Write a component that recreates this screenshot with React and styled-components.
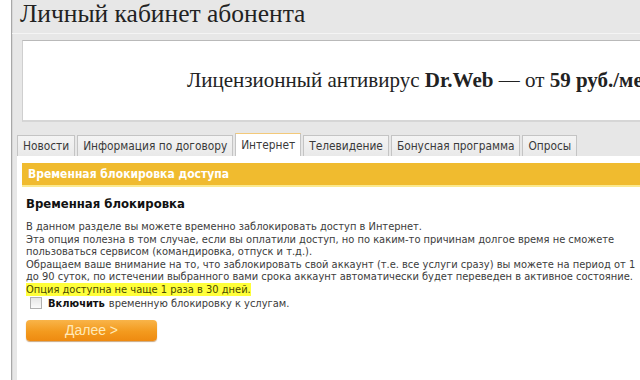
import React from "react";
import styled, { createGlobalStyle } from "styled-components";

const GlobalStyle = createGlobalStyle`
  html, body {
    margin: 0;
    padding: 0;
    background: #ffffff;
    overflow: hidden;
  }
`;

const sans = `"DejaVu Sans Condensed", "DejaVu Sans", Verdana, sans-serif`;

const Page = styled.div`
  width: 640px;
  height: 380px;
  overflow: hidden;
  background: #fff;
  padding-left: 11px;
  box-sizing: border-box;
`;

const Frame = styled.div`
  height: 100%;
  border-left: 1px solid #a8a8a8;
  box-shadow: inset 1px 0 0 #d8d8d8;
  background: #e7e7e7;
  display: flex;
  flex-direction: column;
`;

const Title = styled.h1`
  margin: 0;
  padding: 0 0 0 8px;
  height: 33px;
  font-family: "Liberation Serif", "DejaVu Serif", serif;
  font-weight: normal;
  font-size: 25.5px;
  line-height: 28px;
  color: #222;
  border-bottom: 1px solid #f4f4f4;
  white-space: nowrap;
  overflow: hidden;
`;

const Banner = styled.div`
  margin: 6px 0 0 10px;
  height: 79px;
  background: #fff;
  border-top: 1px solid #b9b9b9;
  border-left: 1px solid #cfcfcf;
  border-bottom: 2px solid #d6d6d6;
  display: flex;
  align-items: center;
  padding-left: 164px;
  white-space: nowrap;
  overflow: hidden;
  font-family: "Liberation Serif", "DejaVu Serif", serif;
  font-size: 21px;
  color: #222;

  b {
    font-weight: bold;
  }
`;

const Tabs = styled.div`
  display: flex;
  align-items: flex-end;
  margin: 11px 0 0 5px;
  height: 23px;
`;

const Tab = styled.div`
  height: ${({ $active }) => ($active ? "23px" : "21px")};
  box-sizing: border-box;
  padding: 0 5px;
  margin-right: 2px;
  display: flex;
  align-items: center;
  font-family: ${sans};
  font-stretch: condensed;
  font-size: 11.8px;
  color: #3a3a3a;
  white-space: nowrap;
  background: ${({ $active }) =>
    $active ? "#fff" : "linear-gradient(#f4f4f4, #e9e9e9)"};
  border: 1px solid #c4c4c4;
  border-top: 1px solid ${({ $active }) => ($active ? "#f3c97a" : "#c4c4c4")};
  border-bottom: none;
`;

const Content = styled.div`
  flex: 1;
  margin-left: 5px;
  background: #fff;
  padding: 7px 0 0 5px;
  font-family: ${sans};
  font-stretch: condensed;
  color: #333;
`;

const Bar = styled.div`
  height: 22px;
  background: #f0bb2f;
  border-bottom: 2px solid #fbe98e;
  color: #fff;
  font-weight: bold;
  font-size: 12px;
  padding-left: 6px;
  display: flex;
  align-items: center;
  white-space: nowrap;
`;

const Body = styled.div`
  padding: 9px 0 0 4px;
`;

const Heading = styled.h2`
  margin: 0 0 10px;
  font-size: 13px;
  font-weight: bold;
  color: #111;
`;

const Text = styled.p`
  margin: 0;
  font-size: 11px;
  line-height: 12.6px;
  color: #3c3c3c;
  white-space: nowrap;
`;

const Mark = styled.span`
  background: #ffff3a;
  color: #4a4a00;
`;

const Check = styled.label`
  display: flex;
  align-items: center;
  margin: 0 0 0 4px;
  font-size: 11px;
  color: #3c3c3c;

  b {
    color: #111;
    margin-right: 4px;
  }
`;

const Box = styled.span`
  width: 10px;
  height: 10px;
  border: 1px solid #b0b0b0;
  background: linear-gradient(#e6e6e6, #fafafa);
  margin-right: 6px;
`;

const Button = styled.button`
  margin-top: 10px;
  width: 131px;
  height: 21px;
  border: none;
  border-radius: 4px;
  background: linear-gradient(#f9b449, #f39a1e 55%, #ee8a10);
  box-shadow: 0 1px 1px rgba(150, 80, 0, 0.5);
  color: #ffe9b8;
  font-family: "Liberation Sans", Arial, sans-serif;
  font-size: 14px;
  padding: 0;
`;

export default function App() {
  return (
    <>
      <GlobalStyle />
      <Page>
        <Frame>
          <Title>Личный кабинет абонента</Title>
          <Banner>
            Лицензионный антивирус&nbsp;<b>Dr.Web</b>&nbsp;— от&nbsp;<b>59 руб./мес</b>
          </Banner>
          <Tabs>
            <Tab>Новости</Tab>
            <Tab>Информация по договору</Tab>
            <Tab $active>Интернет</Tab>
            <Tab>Телевидение</Tab>
            <Tab>Бонусная программа</Tab>
            <Tab>Опросы</Tab>
          </Tabs>
          <Content>
            <Bar>Временная блокировка доступа</Bar>
            <Body>
              <Heading>Временная блокировка</Heading>
              <Text>В данном разделе вы можете временно заблокировать доступ в Интернет.</Text>
              <Text>Эта опция полезна в том случае, если вы оплатили доступ, но по каким-то причинам долгое время не сможете</Text>
              <Text>пользоваться сервисом (командировка, отпуск и т.д.).</Text>
              <Text>Обращаем ваше внимание на то, что заблокировать свой аккаунт (т.е. все услуги сразу) вы можете на период от 1</Text>
              <Text>до 90 суток, по истечении выбранного вами срока аккаунт автоматически будет переведен в активное состояние.</Text>
              <Text>
                <Mark>Опция доступна не чаще 1 раза в 30 дней.</Mark>
              </Text>
              <Check>
                <Box />
                <b>Включить</b> временную блокировку к услугам.
              </Check>
              <Button>Далее &gt;</Button>
            </Body>
          </Content>
        </Frame>
      </Page>
    </>
  );
}
